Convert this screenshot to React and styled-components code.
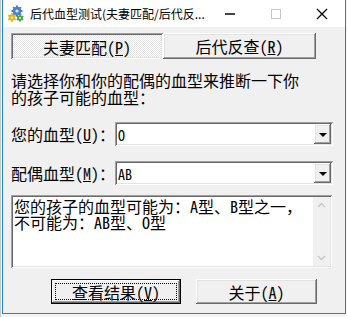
import React from 'react';
import styled, { createGlobalStyle } from 'styled-components';

const GlobalStyle = createGlobalStyle`
  html, body {
    margin: 0;
    padding: 0;
    background: #fdfdfd;
  }
  body {
    font-family: "Noto Sans Mono CJK SC", "Noto Sans CJK SC", sans-serif;
  }
`;

const raised = `
  box-shadow: inset -1px -1px #696969, inset 1px 1px #ffffff, inset -2px -2px #a0a0a0, inset 2px 2px #e3e3e3;
`;

const sunken = `
  box-shadow: inset 1px 1px #a0a0a0, inset -1px -1px #ffffff, inset 2px 2px #696969, inset -2px -2px #e3e3e3;
`;

const Desktop = styled.div`
  width: 347px;
  height: 317px;
  overflow: hidden;
  padding-left: 2px;
  box-sizing: border-box;
  background: linear-gradient(90deg, #c8c8c8 0 1px, #f4f4f4 1px);
`;

const Window = styled.div`
  width: 344px;
  height: 314px;
  box-sizing: border-box;
  border: 1px solid #1883d7;
  border-top: none;
  background: #f0f0f0;
  display: flex;
  flex-direction: column;
`;

const TitleBar = styled.div`
  height: 27px;
  flex: none;
  background: #ffffff;
  display: flex;
  align-items: center;
  padding-left: 4px;
`;

const TitleText = styled.div`
  font-family: "Noto Sans CJK SC", sans-serif;
  font-size: 12px;
  color: #000;
  margin-left: 5px;
  flex: none;
  white-space: nowrap;
  line-height: 1;
`;

const Captions = styled.div`
  margin-left: auto;
  display: flex;
  height: 27px;
`;

const CaptionButton = styled.div`
  width: 46px;
  height: 27px;
  display: flex;
  align-items: center;
  justify-content: center;
`;

const MinGlyph = styled.div`
  width: 10px;
  height: 2px;
  background: #444;
`;

const MaxGlyph = styled.div`
  width: 10px;
  height: 10px;
  box-sizing: border-box;
  border: 1px solid #c6c6c6;
`;

const Body = styled.div`
  flex: 1;
  display: flex;
  flex-direction: column;
  padding: 6px 0 0 8px;
  color: #000;
  font-size: 16px;
`;

const Tabs = styled.div`
  display: flex;
  height: 26px;
`;

const Tab = styled.div`
  width: ${p => p.$w}px;
  box-sizing: border-box;
  display: flex;
  align-items: center;
  justify-content: center;
  font-size: 16px;
  line-height: 1;
  padding-top: ${p => (p.$active ? 2 : 0)}px;
  background: ${p =>
    p.$active
      ? 'repeating-conic-gradient(#ffffff 0 25%, #e6e6e6 0 50%) 0 0 / 2px 2px'
      : '#f0f0f0'};
  ${p => (p.$active ? sunken : raised)}
`;

const Prompt = styled.div`
  margin-top: 13px;
  width: 300px;
  line-height: 17px;
  font-size: 16px;
`;

const FieldRow = styled.div`
  display: flex;
  align-items: center;
  margin-top: ${p => p.$top}px;
  height: 24px;
`;

const FieldLabel = styled.div`
  width: 104px;
  flex: none;
  white-space: nowrap;
  font-size: 16px;
  line-height: 1;
`;

const Combo = styled.div`
  width: 218px;
  height: 24px;
  flex: none;
  box-sizing: border-box;
  background: #fff;
  ${sunken}
  display: flex;
  align-items: stretch;
  padding: 2px;
`;

const ComboValue = styled.div`
  flex: 1;
  font-size: 14px;
  display: flex;
  align-items: center;
  padding-left: 1px;
  padding-top: 2px;
`;

const ComboButton = styled.div`
  width: 17px;
  background: #f0f0f0;
  ${raised}
  display: flex;
  align-items: center;
  justify-content: center;
`;

const Arrow = styled.div`
  width: 0;
  height: 0;
  border-left: 4px solid transparent;
  border-right: 4px solid transparent;
  border-top: 4px solid #000;
  margin-top: 1px;
`;

const Memo = styled.div`
  margin-top: 10px;
  width: 321px;
  height: 73px;
  box-sizing: border-box;
  background: #fff;
  ${sunken}
  padding: 2px;
  display: flex;
`;

const MemoText = styled.div`
  flex: 1;
  font-size: 16px;
  line-height: 16px;
  padding: 1px 0 0 1px;
`;

const ScrollBar = styled.div`
  width: 17px;
  background: #f0f0f0;
  display: flex;
  flex-direction: column;
  justify-content: space-between;
  align-items: center;
  padding: 5px 0;
`;

const Buttons = styled.div`
  display: flex;
  margin-top: 11px;
  padding-left: 40px;
  gap: 15px;
`;

const Button = styled.div`
  width: ${p => p.$w}px;
  height: 25px;
  box-sizing: border-box;
  background: #f0f0f0;
  position: relative;
  display: flex;
  align-items: center;
  justify-content: center;
  font-size: 16px;
  line-height: 1;
  ${p =>
    p.$focused
      ? `border: 1px solid #000; box-shadow: inset -1px -1px #696969, inset 1px 1px #ffffff, inset -2px -2px #a0a0a0;`
      : raised}
`;

const FocusRing = styled.div`
  position: absolute;
  inset: 3px;
  border: 1px dotted #000;
`;

const Chevron = ({ up }) => (
  <svg width="9" height="6" viewBox="0 0 9 6">
    <path
      d={up ? 'M1 5 L4.5 1.5 L8 5' : 'M1 1 L4.5 4.5 L8 1'}
      fill="none"
      stroke="#c4c4c4"
      strokeWidth="1.3"
    />
  </svg>
);

const AppIcon = () => (
  <svg width="18" height="18" viewBox="0 0 18 18" style={{ flex: 'none' }}>
    <g fill="#4a7fd0">
      <circle cx="10" cy="6" r="4.3" />
      {[0, 45, 90, 135, 180, 225, 270, 315].map(a => (
        <rect key={a} x="9" y="0.5" width="2" height="3" transform={`rotate(${a} 10 6)`} />
      ))}
    </g>
    <circle cx="10" cy="6" r="1.6" fill="#dfe9f7" />
    <g fill="#e2b824">
      <circle cx="5" cy="12.5" r="3.3" />
      {[0, 60, 120, 180, 240, 300].map(a => (
        <rect key={a} x="4.2" y="8" width="1.6" height="2.4" transform={`rotate(${a} 5 12.5)`} />
      ))}
    </g>
    <circle cx="5" cy="12.5" r="1.1" fill="#fff6cc" />
    <g fill="#4aa83a">
      <circle cx="13" cy="13" r="2.8" />
      {[0, 60, 120, 180, 240, 300].map(a => (
        <rect key={a} x="12.3" y="9.2" width="1.4" height="2" transform={`rotate(${a} 13 13)`} />
      ))}
    </g>
    <circle cx="13" cy="13" r="1" fill="#dff3d8" />
  </svg>
);

const CloseIcon = () => (
  <svg width="12" height="12" viewBox="0 0 12 12">
    <path d="M1 1 L11 11 M11 1 L1 11" stroke="#000" strokeWidth="1.3" />
  </svg>
);

const App = () => (
  <>
    <GlobalStyle />
    <Desktop>
      <Window>
        <TitleBar>
          <AppIcon />
          <TitleText>后代血型测试(夫妻匹配/后代反...</TitleText>
          <Captions>
            <CaptionButton><MinGlyph /></CaptionButton>
            <CaptionButton><MaxGlyph /></CaptionButton>
            <CaptionButton><CloseIcon /></CaptionButton>
          </Captions>
        </TitleBar>
        <Body>
          <Tabs>
            <Tab $w={152} $active>夫妻匹配(<u>P</u>)</Tab>
            <Tab $w={153}>后代反查(<u>R</u>)</Tab>
          </Tabs>
          <Prompt>请选择你和你的配偶的血型来推断一下你的孩子可能的血型：</Prompt>
          <FieldRow $top={16}>
            <FieldLabel>您的血型(<u>U</u>)：</FieldLabel>
            <Combo>
              <ComboValue>O</ComboValue>
              <ComboButton><Arrow /></ComboButton>
            </Combo>
          </FieldRow>
          <FieldRow $top={15}>
            <FieldLabel>配偶血型(<u>M</u>)：</FieldLabel>
            <Combo>
              <ComboValue>AB</ComboValue>
              <ComboButton><Arrow /></ComboButton>
            </Combo>
          </FieldRow>
          <Memo>
            <MemoText>
              您的孩子的血型可能为：A型、B型之一，
              <br />
              不可能为：AB型、O型
            </MemoText>
            <ScrollBar>
              <Chevron up />
              <Chevron />
            </ScrollBar>
          </Memo>
          <Buttons>
            <Button $w={130} $focused>
              <FocusRing />
              查看结果(<u>V</u>)
            </Button>
            <Button $w={121}>关于(<u>A</u>)</Button>
          </Buttons>
        </Body>
      </Window>
    </Desktop>
  </>
);

export default App;
